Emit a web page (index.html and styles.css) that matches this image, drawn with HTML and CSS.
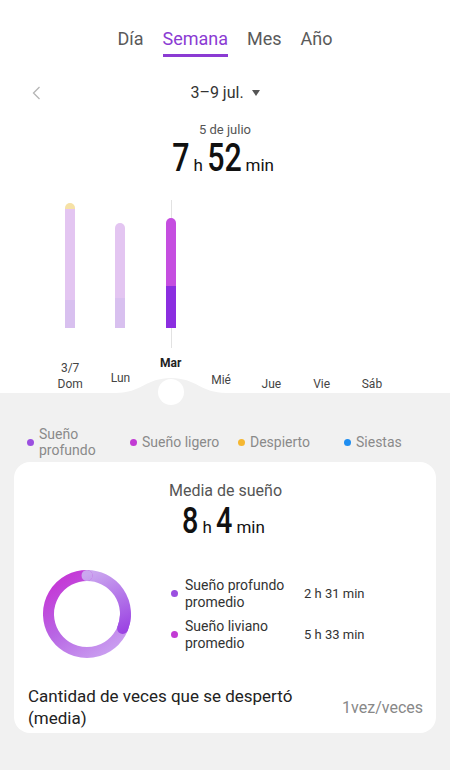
FILE: index.html
```html
<!DOCTYPE html>
<html lang="es">
<head>
<meta charset="utf-8">
<link rel="stylesheet" href="styles.css">
</head>
<body>
<div class="top">
  <nav class="tabs">
    <span class="tab">Día</span>
    <span class="tab active">Semana</span>
    <span class="tab">Mes</span>
    <span class="tab">Año</span>
  </nav>
  <div class="daterow">
    <svg class="chev" viewBox="0 0 9 14"><path d="M7.5 1 L1.5 7 L7.5 13" fill="none" stroke="#b5b5b5" stroke-width="1.3"/></svg>
    <div class="range">3–9 jul. <span class="tri"></span></div>
    <span></span>
  </div>
  <div class="sel-date">5 de julio</div>
  <div class="big"><span class="num d1">7</span><span class="unit">h</span><span class="num d2">52</span><span class="unit">min</span></div>
  <div class="chart">
    <div class="col">
      <div class="plot"><div class="bar" style="height:125px"><div class="seg-awake"></div><div class="seg-light"></div><div class="seg-deep" style="height:28px"></div></div></div>
      <div class="lbl lbl-low">3/7<br>Dom</div>
    </div>
    <div class="col">
      <div class="plot"><div class="bar" style="height:105px"><div class="seg-light"></div><div class="seg-deep" style="height:30px"></div></div></div>
      <div class="lbl lbl-mid">Lun</div>
    </div>
    <div class="col">
      <div class="cursor"></div>
      <div class="plot"><div class="bar sel" style="height:110px"><div class="seg-light"></div><div class="seg-deep" style="height:42px"></div></div></div>
      <div class="lbl lbl-high lbl-sel">Mar</div>
    </div>
    <div class="col">
      <div class="plot"></div>
      <div class="lbl lbl-mie">Mié</div>
    </div>
    <div class="col">
      <div class="plot"></div>
      <div class="lbl lbl-low">Jue</div>
    </div>
    <div class="col">
      <div class="plot"></div>
      <div class="lbl lbl-low">Vie</div>
    </div>
    <div class="col">
      <div class="plot"></div>
      <div class="lbl lbl-low">Sáb</div>
    </div>
  </div>
</div>
<div class="bottom">
  <svg class="hump" viewBox="0 0 110 17"><path d="M0 16 C 25 16, 30 1, 55 1 C 80 1, 85 16, 110 16 L110 17 L0 17 Z" fill="#f1f1f1"/></svg>
  <div class="knob"></div>
  <div class="legend">
    <div class="li"><span class="dot dot-deep"></span><span>Sueño profundo</span></div>
    <div class="li"><span class="dot dot-light"></span><span>Sueño ligero</span></div>
    <div class="li"><span class="dot dot-awake"></span><span>Despierto</span></div>
    <div class="li"><span class="dot dot-nap"></span><span>Siestas</span></div>
  </div>
  <div class="card">
    <div class="card-title">Media de sueño</div>
    <div class="big card-big"><span class="num d1">8</span><span class="unit">h</span><span class="num d1">4</span><span class="unit">min</span></div>
    <div class="donut-row">
      <svg class="donut" viewBox="0 0 88 88">
        <defs>
          <linearGradient id="gDeep" gradientUnits="userSpaceOnUse" x1="50" y1="2" x2="78" y2="66">
            <stop offset="0" stop-color="#cba7ef"/>
            <stop offset="1" stop-color="#993fe2"/>
          </linearGradient>
          <linearGradient id="gLight" gradientUnits="userSpaceOnUse" x1="80" y1="78" x2="30" y2="4">
            <stop offset="0" stop-color="#cba3f1"/>
            <stop offset="0.55" stop-color="#b866e4"/>
            <stop offset="1" stop-color="#c43bd7"/>
          </linearGradient>
        </defs>
        <path d="M44 5.5 A38.5 38.5 0 1 1 43.99 5.5" fill="none" stroke="url(#gDeep)" stroke-width="11" stroke-linecap="round" stroke-dasharray="75 300"/>
        <path d="M44 5.5 A38.5 38.5 0 1 1 43.99 5.5" fill="none" stroke="url(#gLight)" stroke-width="11" stroke-linecap="round" stroke-dasharray="0 75 167 300"/>
        <path d="M44 5.5 A38.5 38.5 0 1 1 43.99 5.5" fill="none" stroke="url(#gDeep)" stroke-width="11" stroke-linecap="round" stroke-dasharray="0 62 13 300"/>
      </svg>
      <div class="dlegend">
        <div class="drow"><span class="dot dot-deep"></span><span class="dtext">Sueño profundo promedio</span><span class="dval">2 h 31 min</span></div>
        <div class="drow"><span class="dot dot-light"></span><span class="dtext">Sueño liviano promedio</span><span class="dval">5 h 33 min</span></div>
      </div>
    </div>
    <div class="wake">
      <div class="wake-text">Cantidad de veces que se despertó (media)</div>
      <div class="wake-val">1vez/veces</div>
    </div>
  </div>
</div>
</body>
</html>
```

FILE: styles.css
```css
* { box-sizing: border-box; }
html, body { margin: 0; }
body {
  width: 450px;
  height: 770px;
  overflow: hidden;
  background: #f1f1f1;
  font-family: Roboto, "Noto Sans", sans-serif;
  color: #333;
}
.top { background: #fff; height: 393px; }
.tabs { display: flex; justify-content: center; gap: 19px; padding-top: 27px; }
.tab {
  font-size: 18px; line-height: 24px; color: #5a5a5a;
  padding-bottom: 3px; border-bottom: 3px solid transparent;
}
.tab.active { color: #8b3bd3; border-bottom-color: #8b3bd3; }
.daterow {
  display: grid; grid-template-columns: 1fr auto 1fr; align-items: center;
  margin-top: 24px; height: 24px;
}
.chev { margin-left: 32px; width: 9px; height: 14px; }
.range { font-size: 16px; line-height: 24px; color: #333; display: flex; align-items: center; gap: 8px; }
.tri {
  width: 0; height: 0;
  border-left: 4.5px solid transparent; border-right: 4.5px solid transparent;
  border-top: 6px solid #555;
}
.sel-date { margin-top: 17px; text-align: center; font-size: 13px; line-height: 16px; color: #555; }
.big {
  display: flex; justify-content: center; align-items: baseline;
  height: 40px; line-height: 40px; color: #111;
}
.num {
  display: inline-block; font-family: Roboto, sans-serif; font-weight: 500;
  font-size: 38px; transform: scaleX(0.8); transform-origin: center;
}
.num.d1 { margin: 0 -0.056em; }
.num.d2 { margin: 0 -0.112em; }
.unit { font-size: 17px; margin: 0 4px; }
.chart { display: flex; padding-left: 45px; }
.col { width: 50.3px; display: flex; flex-direction: column; align-items: center; position: relative; }
.plot { height: 150px; display: flex; align-items: flex-end; position: relative; z-index: 1; }
.cursor { position: absolute; left: 50%; top: 22px; width: 1px; height: 148px; background: #e2e2e2; }
.bar { width: 10px; border-radius: 5px 5px 0 0; overflow: hidden; display: flex; flex-direction: column; }
.seg-awake { height: 6px; background: #f6e1a6; }
.seg-light { flex: 1; background: #e3c5f1; }
.seg-deep { background: #d8c0ef; }
.bar.sel .seg-light { background: #c54ee0; }
.bar.sel .seg-deep { background: #8b2ee0; }
.lbl {
  height: 65px; display: flex; flex-direction: column; justify-content: flex-end;
  text-align: center; font-size: 12px; line-height: 16px; color: #444; white-space: nowrap;
}
.lbl-low { padding-bottom: 1px; }
.lbl-mid { padding-bottom: 7px; }
.lbl-mie { padding-bottom: 5px; }
.lbl-high { padding-bottom: 22px; }
.lbl-sel { color: #222; font-weight: 700; }
.bottom { position: relative; padding-top: 33px; }
.hump { position: absolute; left: 116px; top: -16px; width: 110px; height: 17px; }
.knob {
  position: absolute; left: 158px; top: -14px; width: 26px; height: 26px;
  border-radius: 50%; background: #fff;
}
.legend {
  display: grid; grid-template-columns: 103px 108px 106px auto; padding-left: 27px;
  height: 32px; align-items: center; font-size: 14px; line-height: 16px; color: #8a8a8a;
}
.li { display: flex; align-items: center; gap: 5px; }
.dot { width: 7px; height: 7px; border-radius: 50%; flex: none; }
.dot-deep { background: #9b4fe0; }
.dot-light { background: #c23bd4; }
.dot-awake { background: #f5b731; }
.dot-nap { background: #1f8ef1; }
.card {
  margin: 4px 14px 0; background: #fff; border-radius: 16px;
  height: 271px; padding: 19px 13px 0 14px;
}
.card-title { text-align: center; font-size: 16px; line-height: 20px; color: #555; }
.card-big { margin-top: 2px; height: 36px; line-height: 36px; }
.card-big .num { font-size: 36px; }
.donut-row { display: flex; align-items: center; margin-top: 31px; padding-left: 15px; }
.donut { width: 88px; height: 88px; flex: none; }
.dlegend { margin-left: 40px; display: flex; flex-direction: column; gap: 7px; }
.drow { display: grid; grid-template-columns: 7px 126px auto; align-items: center; }
.dtext { padding-left: 7px; font-size: 14px; line-height: 17px; color: #333; }
.dval { font-size: 13px; color: #333; }
.wake { display: flex; align-items: center; justify-content: space-between; gap: 20px; margin-top: 27px; }
.wake-text { font-size: 17px; line-height: 22px; color: #222; }
.wake-val { font-size: 16px; color: #888; flex: none; }
```
